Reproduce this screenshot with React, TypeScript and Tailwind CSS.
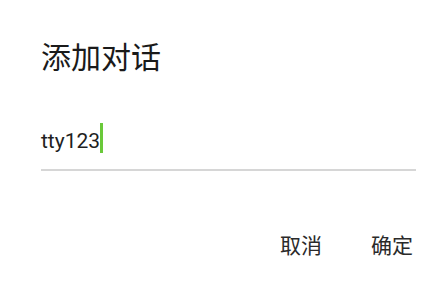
const cjk = "font-['Noto_Sans_CJK_SC',sans-serif]";

export default function App() {
  return (
    <div className="h-[281px] w-[434px] overflow-hidden bg-white pl-[41px] pr-[18px] pt-[40px]">
      <h1 className={`${cjk} text-[30px] leading-[30px] font-normal text-[#1a1a1a]`}>添加对话</h1>

      <div className="mt-[53px] border-b-2 border-[#d6d6d6] pb-[16px]">
        <div className="flex items-start">
          <span className="mt-[6px] font-['Roboto',sans-serif] text-[21px] leading-[24px] text-[#1f1f1f]">tty123</span>
          <span className="h-[30px] w-[3px] bg-[#6ac93a]" aria-hidden />
        </div>
      </div>

      <div className={`${cjk} mt-[63px] mr-[3px] flex justify-end gap-[49px] text-[21px] leading-[21px] text-[#2a2a2a]`}>
        <button type="button">取消</button>
        <button type="button">确定</button>
      </div>
    </div>
  );
}
